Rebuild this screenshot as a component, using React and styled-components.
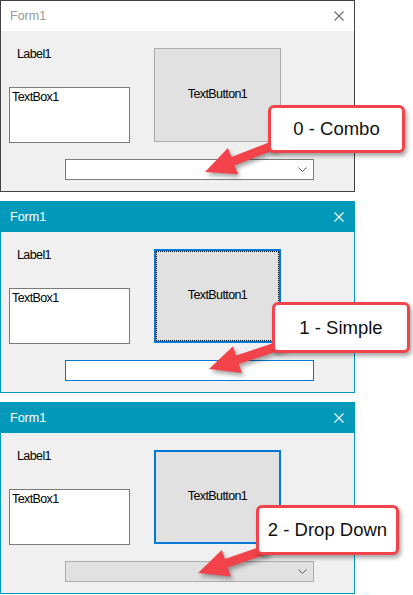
import React from 'react';
import styled, { createGlobalStyle, css } from 'styled-components';

const GlobalStyle = createGlobalStyle`
    html, body {
        margin:0;
        padding:0;
        background:#ffffff;
    }
    body{
        font-family:"Liberation Sans", Arial, sans-serif;
    }
`;

const TEAL = '#0399bb';
const FOCUS_BLUE = '#0078d7';
const CALLOUT_RED = '#f2434a';

const Page = styled.div`
    width:413px;height:595px;
    display:flex;
    flex-direction:column;
    gap:9px;
    overflow:hidden;
`;

const Window = styled.div`
    position:relative;
    width:355px;height:192px;
    box-sizing:border-box;
    border:1px solid ${props => props.$active ? TEAL : '#424242'};
    background-color:#f0f0f0;
    display:flex;
    flex-direction:column;
`;

const TitleBar = styled.div`
    height:30px;
    flex:0 0 30px;
    display:flex;
    flex-direction:row;
    align-items:center;
    justify-content:space-between;
    padding:0 10px 0 9px;
    background-color:${props => props.$active ? TEAL : '#ffffff'};
    color:${props => props.$active ? '#ffffff' : '#9a9a9a'};
    font-size:12.5px;
    .close{
        display:block;
        width:10px;height:10px;
        margin-top:-1px;
    }
`;

const FormBody = styled.div`
    flex:1;
    display:grid;
    grid-template-columns:121px 127px;
    grid-template-rows:auto auto auto;
    column-gap:24px;
    align-content:start;
    padding:16px 0 0 8px;
    font-size:12.5px;
    letter-spacing:-0.6px;
    color:#000000;
`;

const Label = styled.div`
    grid-column:1;
    grid-row:1;
    margin-left:8px;
    height:14px;
    line-height:14px;
`;

const TextBox = styled.div`
    grid-column:1;
    grid-row:2;
    margin-top:26px;
    height:56px;
    box-sizing:border-box;
    border:1px solid #7a7a7a;
    background-color:#ffffff;
    padding:2px 2px;
    line-height:14px;
`;

const TextButton = styled.div`
    grid-column:2;
    grid-row:1 / span 2;
    margin-top:1px;
    height:94px;
    box-sizing:border-box;
    background-color:#e1e1e1;
    display:flex;
    align-items:center;
    justify-content:center;
    padding-bottom:2px;
    border:1px solid #adadad;
    ${props => props.$state !== 'idle' && css`
        border:2px solid ${FOCUS_BLUE};
    `}
    ${props => props.$state === 'focused' && css`
        outline:1px dotted #000000;
        outline-offset:-3px;
    `}
`;

const Combo = styled.div`
    grid-column:1 / span 2;
    grid-row:3;
    margin:16px 0 0 56px;
    width:249px;height:21px;
    box-sizing:border-box;
    display:flex;
    align-items:center;
    justify-content:flex-end;
    padding-right:6px;
    border:1px solid #7a7a7a;
    background-color:#ffffff;
    ${props => props.$style === 'simple' && css`
        border-color:${FOCUS_BLUE};
    `}
    ${props => props.$style === 'dropdown' && css`
        border-color:#adadad;
        background-color:#e1e1e1;
    `}
`;

const ArrowLayer = styled.svg`
    position:absolute;
    top:-1px;left:-1px;
    width:413px;height:192px;
    overflow:visible;
    pointer-events:none;
    filter:drop-shadow(2px 3px 2px rgba(0,0,0,0.35));
`;

const Callout = styled.div`
    position:absolute;
    left:${props => props.$x}px;
    top:${props => props.$y}px;
    width:${props => props.$w}px;
    height:${props => props.$h}px;
    box-sizing:border-box;
    border:3.5px solid ${CALLOUT_RED};
    border-radius:6px;
    background-color:#ffffff;
    box-shadow:2px 3px 4px rgba(0,0,0,0.35);
    display:flex;
    align-items:center;
    justify-content:center;
    font-family:"Liberation Sans", Arial, sans-serif;
    font-size:18.5px;
    color:#111111;
    white-space:nowrap;
`;

// arrow polygon: head at tip, shaft running back toward tail
const arrowPoints = (tip, tail, headLen = 30, headHalf = 14, shaftHalf = 4.5) => {
    const dx = tail[0] - tip[0];
    const dy = tail[1] - tip[1];
    const len = Math.hypot(dx, dy);
    const ux = dx / len, uy = dy / len;
    const nx = -uy, ny = ux;
    const bx = tip[0] + ux * headLen, by = tip[1] + uy * headLen;
    const pts = [
        tip,
        [bx + nx * headHalf, by + ny * headHalf],
        [bx + nx * shaftHalf, by + ny * shaftHalf],
        [tail[0] + nx * shaftHalf, tail[1] + ny * shaftHalf],
        [tail[0] - nx * shaftHalf, tail[1] - ny * shaftHalf],
        [bx - nx * shaftHalf, by - ny * shaftHalf],
        [bx - nx * headHalf, by - ny * headHalf],
    ];
    return pts.map(p => `${p[0].toFixed(1)},${p[1].toFixed(1)}`).join(' ');
};

const CloseIcon = ({ color }) => (
    <svg className="close" viewBox="0 0 10 10">
        <path d="M0.5 0.5 L9.5 9.5 M9.5 0.5 L0.5 9.5" stroke={color} strokeWidth="1.1" fill="none" />
    </svg>
);

const Chevron = () => (
    <svg width="9" height="5" viewBox="0 0 9 5" style={{ display: 'block' }}>
        <path d="M0.5 0.5 L4.5 4.5 L8.5 0.5" stroke="#555555" strokeWidth="1" fill="none" />
    </svg>
);

const forms = [
    {
        key: 'combo',
        active: false,
        button: 'idle',
        combo: 'combo',
        caption: '0 - Combo',
        box: { x: 268, y: 105, w: 137, h: 48 },
        arrow: { tip: [205, 172], tail: [280, 143] },
    },
    {
        key: 'simple',
        active: true,
        button: 'focused',
        combo: 'simple',
        caption: '1 - Simple',
        box: { x: 272, y: 101, w: 138, h: 51 },
        arrow: { tip: [209, 168], tail: [285, 143] },
    },
    {
        key: 'dropdown',
        active: true,
        button: 'selected',
        combo: 'dropdown',
        caption: '2 - Drop Down',
        box: { x: 256, y: 103, w: 143, h: 50 },
        arrow: { tip: [198, 171], tail: [268, 147] },
    },
];

const FormWindow = ({ form }) => (
    <Window $active={form.active}>
        <TitleBar $active={form.active}>
            <span>Form1</span>
            <CloseIcon color={form.active ? '#ffffff' : '#6e6e6e'} />
        </TitleBar>
        <FormBody>
            <Label>Label1</Label>
            <TextButton $state={form.button}>TextButton1</TextButton>
            <TextBox>TextBox1</TextBox>
            <Combo $style={form.combo}>
                {form.combo !== 'simple' && <Chevron />}
            </Combo>
        </FormBody>
        <ArrowLayer viewBox="0 0 413 192">
            <polygon points={arrowPoints(form.arrow.tip, form.arrow.tail)} fill={CALLOUT_RED} />
        </ArrowLayer>
        <Callout $x={form.box.x - 1} $y={form.box.y - 1} $w={form.box.w} $h={form.box.h}>
            {form.caption}
        </Callout>
    </Window>
);

const App = () => {
    return (
        <>
            <GlobalStyle />
            <Page>
                {forms.map(form => <FormWindow key={form.key} form={form} />)}
            </Page>
        </>
    );
};

export default App;
